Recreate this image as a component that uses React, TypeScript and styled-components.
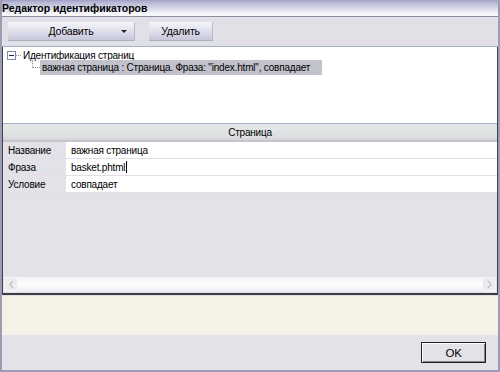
import styled, { createGlobalStyle } from "styled-components"

const GlobalStyle = createGlobalStyle`
    html, body {
        margin: 0;
        padding: 0;
        background: #e2e2e8;
    }
    * {
        box-sizing: border-box;
    }
`

const rows = [
    { label: "Название", value: "важная страница" },
    { label: "Фраза", value: "basket.phtml", caret: true },
    { label: "Условие", value: "совпадает" },
]

const App = () => {
    return (
        <Window>
            <GlobalStyle />

            <TitleBar>Редактор идентификаторов</TitleBar>

            <Toolbar>
                <ToolButton $width={127}>
                    <span>Добавить</span>
                    <DropArrow />
                </ToolButton>
                <ToolButton $width={64}>Удалить</ToolButton>
            </Toolbar>

            <Frame>
                <Tree>
                    <TreeNode>
                        <Expander>
                            <svg width="9" height="9" viewBox="0 0 9 9">
                                <rect x="0.5" y="0.5" width="8" height="8" fill="#fff" stroke="#7b8ea8" />
                                <line x1="2" y1="4.5" x2="7" y2="4.5" stroke="#1c2a4a" />
                            </svg>
                        </Expander>
                        <HLine $width={5} />
                        <NodeText>Идентификация страниц</NodeText>
                    </TreeNode>
                    <ChildNode>
                        <Connector />
                        <SelectedText>важная страница : Страница. Фраза: "index.html", совпадает</SelectedText>
                    </ChildNode>
                </Tree>

                <Grid>
                    <GridHeader>Страница</GridHeader>
                    {rows.map((r) => (
                        <GridRow key={r.label}>
                            <RowLabel>{r.label}</RowLabel>
                            <RowValue>
                                {r.value}
                                {r.caret && <Caret />}
                            </RowValue>
                        </GridRow>
                    ))}
                    <GridFill />
                    <ScrollBar>
                        <ScrollArrow>
                            <svg width="7" height="9" viewBox="0 0 7 9">
                                <path d="M5 1 L2 4.5 L5 8" fill="none" stroke="#c4c4cc" strokeWidth="1.5" />
                            </svg>
                        </ScrollArrow>
                        <ScrollArrow>
                            <svg width="7" height="9" viewBox="0 0 7 9">
                                <path d="M2 1 L5 4.5 L2 8" fill="none" stroke="#c4c4cc" strokeWidth="1.5" />
                            </svg>
                        </ScrollArrow>
                    </ScrollBar>
                </Grid>
            </Frame>

            <HintArea />

            <Footer>
                <OkButton>OK</OkButton>
            </Footer>
        </Window>
    )
}

const Window = styled.div`
    width: 500px;
    height: 372px;
    display: flex;
    flex-direction: column;
    background: #e2e2e8;
    border-left: 2px solid #9c9cb4;
    border-right: 2px solid #9c9cb4;
    border-bottom: 2px solid #9c9cb4;
    font-family: "Liberation Sans", Arial, sans-serif;
    font-size: 10px;
    letter-spacing: -0.2px;
    color: #000;
    overflow: hidden;
`

const TitleBar = styled.div`
    flex: none;
    height: 17px;
    padding: 2px 0 0 2px;
    margin: 0 -2px;
    font-weight: bold;
    font-size: 10.5px;
    letter-spacing: 0;
    background: linear-gradient(to bottom, #9e9ec4 0px, #b4b4d2 2px, #dcdcec 9px, #f8f8fc 14px);
    border-bottom: 1px solid #8e8ea2;
    white-space: nowrap;
`

const Toolbar = styled.div`
    flex: none;
    height: 30px;
    display: flex;
    align-items: flex-start;
    gap: 14px;
    padding: 5px 0 0 6px;
    background: #e0e0e6;
    border-bottom: 1px solid #a4b0c4;
`

const ToolButton = styled.div<{ $width: number }>`
    width: ${(p) => p.$width}px;
    height: 19px;
    display: flex;
    align-items: center;
    justify-content: center;
    position: relative;
    background: linear-gradient(to bottom, #f4f4fa 0%, #e2e2ee 45%, #c6c6da 100%);
    border-right: 1px solid #b8b8cc;
    border-bottom: 1px solid #aeaec4;
    font-size: 10.5px;
`

const DropArrow = styled.span`
    position: absolute;
    right: 7px;
    top: 8px;
    width: 0;
    height: 0;
    border-left: 3px solid transparent;
    border-right: 3px solid transparent;
    border-top: 3px solid #202030;
`

const Frame = styled.div`
    flex: none;
    height: 248px;
    display: flex;
    flex-direction: column;
    border-left: 1px solid #404048;
    border-right: 1px solid #404048;
    border-bottom: 2px solid #3c3c44;
`

const Tree = styled.div`
    flex: none;
    height: 77px;
    background: #fff;
    padding: 3px 0 0 4px;
    border-bottom: 1px solid #a4b0c4;
`

const TreeNode = styled.div`
    display: flex;
    align-items: center;
    height: 10px;
`

const Expander = styled.span`
    display: flex;
    width: 9px;
    height: 9px;
`

const HLine = styled.span<{ $width: number }>`
    width: ${(p) => p.$width}px;
    border-top: 1px dotted #9090a0;
    margin-right: 2px;
`

const NodeText = styled.span`
    white-space: nowrap;
`

const ChildNode = styled.div`
    display: flex;
    align-items: center;
    height: 15px;
    padding-left: 25px;
`

const Connector = styled.span`
    align-self: flex-start;
    width: 8px;
    height: 8px;
    border-left: 1px dotted #9090a0;
    border-bottom: 1px dotted #9090a0;
`

const SelectedText = styled.span`
    height: 15px;
    line-height: 15px;
    padding: 0 12px 0 2px;
    background: #c2c2cc;
    white-space: nowrap;
`

const Grid = styled.div`
    flex: 1;
    display: flex;
    flex-direction: column;
    background: #e2e2e8;
`

const GridHeader = styled.div`
    flex: none;
    height: 18px;
    display: flex;
    align-items: center;
    justify-content: center;
    background: linear-gradient(to bottom, #e6e8e8 0%, #dcdfe0 85%, #cfd2d4 100%);
    border-bottom: 2px solid #c8c6cc;
`

const GridRow = styled.div`
    flex: none;
    height: 17px;
    display: flex;
    border-bottom: 1px solid #e4dfe6;
`

const RowLabel = styled.div`
    width: 63px;
    padding-left: 5px;
    display: flex;
    align-items: center;
    background: #e2e2e8;
`

const RowValue = styled.div`
    flex: 1;
    display: flex;
    align-items: center;
    padding-left: 5px;
    background: #fff;
`

const Caret = styled.span`
    width: 1px;
    height: 12px;
    margin-left: 1px;
    background: #000;
`

const GridFill = styled.div`
    flex: 1;
`

const ScrollBar = styled.div`
    flex: none;
    height: 15px;
    margin: 0 1px 1px 1px;
    display: flex;
    justify-content: space-between;
    background: linear-gradient(to bottom, #f2f2f8 0%, #ffffff 50%, #ececf4 100%);
`

const ScrollArrow = styled.div`
    width: 14px;
    height: 14px;
    display: flex;
    align-items: center;
    justify-content: center;
    background: #ececee;
    border: 1px solid #f6f6f8;
`

const HintArea = styled.div`
    flex: none;
    height: 39px;
    margin-top: 1px;
    background: #f4f2e6;
`

const Footer = styled.div`
    flex: 1;
    display: flex;
    justify-content: flex-end;
    align-items: flex-start;
    padding: 7px 12px 0 0;
`

const OkButton = styled.div`
    width: 65px;
    height: 21px;
    display: flex;
    align-items: center;
    justify-content: center;
    background: #e2e2e8;
    border: 1px solid #202020;
    box-shadow: inset 1px 1px 0 #ffffff, inset -1px -1px 0 #808088;
    font-size: 11.5px;
`

export default App
